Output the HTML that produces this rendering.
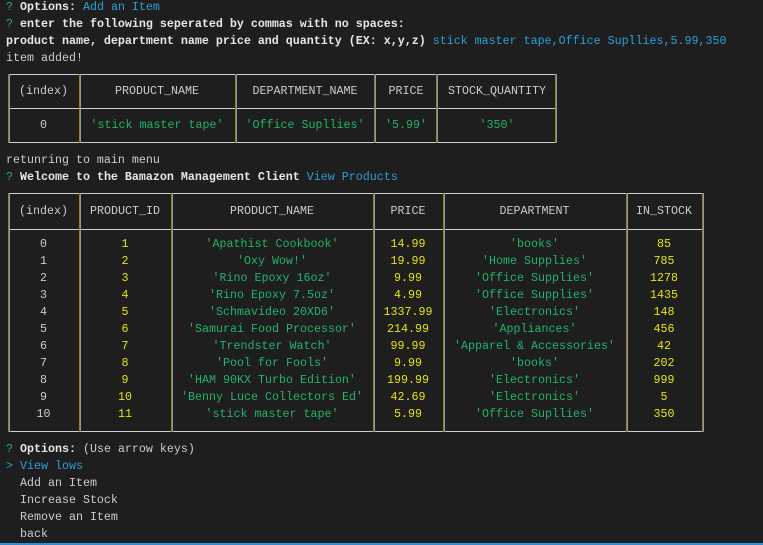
<!DOCTYPE html>
<html><head><meta charset="utf-8"><style>
*{margin:0;padding:0;box-sizing:border-box}
body{width:763px;height:545px;background:#1e1e1e;color:#cccccc;font-family:"Liberation Mono",monospace;font-size:11.67px;position:relative;overflow:hidden}
.l{position:absolute;left:6px;white-space:pre;line-height:17px;height:17px}
.g{color:#23b36b}.c{color:#2a9fd6}.y{color:#e5e510}.b{font-weight:bold;color:#e8e8e8}
.h{position:absolute;height:1px;background:#cfcfcf}
.v{position:absolute;width:2px;border-left:1px solid #a07a30;background:#8a9aa6}
.row{position:absolute;display:flex;white-space:pre;line-height:17px}
.row div{text-align:center}
</style></head><body>
<div class="l" style="top:-1px"><span class="g">?</span> <span class="b">Options:</span> <span class="c">Add an Item</span></div>
<div class="l" style="top:16px"><span class="g">?</span> <span class="b">enter the following seperated by commas with no spaces:</span></div>
<div class="l" style="top:33px"><span class="b">product name, department name price and quantity (EX: x,y,z)</span> <span class="c">stick master tape,Office Supllies,5.99,350</span></div>
<div class="l" style="top:50px">item added!</div>

<div class="h" style="left:8px;width:549px;top:74px"></div>
<div class="h" style="left:8px;width:549px;top:108px"></div>
<div class="h" style="left:8px;width:549px;top:142px"></div>
<div class="v" style="left:8px;top:74px;height:69px"></div>
<div class="v" style="left:79px;top:74px;height:69px"></div>
<div class="v" style="left:235px;top:74px;height:69px"></div>
<div class="v" style="left:374px;top:74px;height:69px"></div>
<div class="v" style="left:436px;top:74px;height:69px"></div>
<div class="v" style="left:555px;top:74px;height:69px"></div>
<div class="row" style="left:8px;top:83px"><div style="width:71px">(index)</div><div style="width:156px">PRODUCT_NAME</div><div style="width:140px">DEPARTMENT_NAME</div><div style="width:62px">PRICE</div><div style="width:120px">STOCK_QUANTITY</div></div>
<div class="row g" style="left:8px;top:117px"><div style="width:71px;color:#ccc">0</div><div style="width:156px">'stick master tape'</div><div style="width:140px">'Office Supllies'</div><div style="width:62px">'5.99'</div><div style="width:120px">'350'</div></div>

<div class="l" style="top:152px">retunring to main menu</div>
<div class="l" style="top:169px"><span class="g">?</span> <span class="b">Welcome to the Bamazon Management Client</span> <span class="c">View Products</span></div>

<div class="h" style="left:8px;width:696px;top:193px"></div>
<div class="h" style="left:8px;width:696px;top:229px"></div>
<div class="h" style="left:8px;width:696px;top:431px"></div>
<div class="v" style="left:8px;top:193px;height:239px"></div>
<div class="v" style="left:79px;top:193px;height:239px"></div>
<div class="v" style="left:171px;top:193px;height:239px"></div>
<div class="v" style="left:373px;top:193px;height:239px"></div>
<div class="v" style="left:443px;top:193px;height:239px"></div>
<div class="v" style="left:626px;top:193px;height:239px"></div>
<div class="v" style="left:702px;top:193px;height:239px"></div>
<div class="row" style="left:8px;top:203px"><div style="width:71px">(index)</div><div style="width:92px">PRODUCT_ID</div><div style="width:202px">PRODUCT_NAME</div><div style="width:70px">PRICE</div><div style="width:183px">DEPARTMENT</div><div style="width:76px">IN_STOCK</div></div>
<div style="position:absolute;left:8px;top:236px">
<div class="row" style="position:relative;flex-direction:column">
<div style="display:flex"><div style="width:71px">0</div><div class="y" style="width:92px">1</div><div class="g" style="width:202px">'Apathist Cookbook'</div><div class="y" style="width:70px">14.99</div><div class="g" style="width:183px">'books'</div><div class="y" style="width:76px">85</div></div>
<div style="display:flex"><div style="width:71px">1</div><div class="y" style="width:92px">2</div><div class="g" style="width:202px">'Oxy Wow!'</div><div class="y" style="width:70px">19.99</div><div class="g" style="width:183px">'Home Supplies'</div><div class="y" style="width:76px">785</div></div>
<div style="display:flex"><div style="width:71px">2</div><div class="y" style="width:92px">3</div><div class="g" style="width:202px">'Rino Epoxy 16oz'</div><div class="y" style="width:70px">9.99</div><div class="g" style="width:183px">'Office Supplies'</div><div class="y" style="width:76px">1278</div></div>
<div style="display:flex"><div style="width:71px">3</div><div class="y" style="width:92px">4</div><div class="g" style="width:202px">'Rino Epoxy 7.5oz'</div><div class="y" style="width:70px">4.99</div><div class="g" style="width:183px">'Office Supplies'</div><div class="y" style="width:76px">1435</div></div>
<div style="display:flex"><div style="width:71px">4</div><div class="y" style="width:92px">5</div><div class="g" style="width:202px">'Schmavideo 20XD6'</div><div class="y" style="width:70px">1337.99</div><div class="g" style="width:183px">'Electronics'</div><div class="y" style="width:76px">148</div></div>
<div style="display:flex"><div style="width:71px">5</div><div class="y" style="width:92px">6</div><div class="g" style="width:202px">'Samurai Food Processor'</div><div class="y" style="width:70px">214.99</div><div class="g" style="width:183px">'Appliances'</div><div class="y" style="width:76px">456</div></div>
<div style="display:flex"><div style="width:71px">6</div><div class="y" style="width:92px">7</div><div class="g" style="width:202px">'Trendster Watch'</div><div class="y" style="width:70px">99.99</div><div class="g" style="width:183px">'Apparel &amp; Accessories'</div><div class="y" style="width:76px">42</div></div>
<div style="display:flex"><div style="width:71px">7</div><div class="y" style="width:92px">8</div><div class="g" style="width:202px">'Pool for Fools'</div><div class="y" style="width:70px">9.99</div><div class="g" style="width:183px">'books'</div><div class="y" style="width:76px">202</div></div>
<div style="display:flex"><div style="width:71px">8</div><div class="y" style="width:92px">9</div><div class="g" style="width:202px">'HAM 90KX Turbo Edition'</div><div class="y" style="width:70px">199.99</div><div class="g" style="width:183px">'Electronics'</div><div class="y" style="width:76px">999</div></div>
<div style="display:flex"><div style="width:71px">9</div><div class="y" style="width:92px">10</div><div class="g" style="width:202px">'Benny Luce Collectors Ed'</div><div class="y" style="width:70px">42.69</div><div class="g" style="width:183px">'Electronics'</div><div class="y" style="width:76px">5</div></div>
<div style="display:flex"><div style="width:71px">10</div><div class="y" style="width:92px">11</div><div class="g" style="width:202px">'stick master tape'</div><div class="y" style="width:70px">5.99</div><div class="g" style="width:183px">'Office Supllies'</div><div class="y" style="width:76px">350</div></div>
</div></div>

<div class="l" style="top:441px"><span class="g">?</span> <span class="b">Options:</span> (Use arrow keys)</div>
<div class="l c" style="top:458px">&gt; View lows</div>
<div class="l" style="top:475px">  Add an Item</div>
<div class="l" style="top:492px">  Increase Stock</div>
<div class="l" style="top:509px">  Remove an Item</div>
<div class="l" style="top:526px">  back</div>
<div style="position:absolute;left:0;top:543px;width:763px;height:2px;background:#2a8fd6"></div>
</body></html>
